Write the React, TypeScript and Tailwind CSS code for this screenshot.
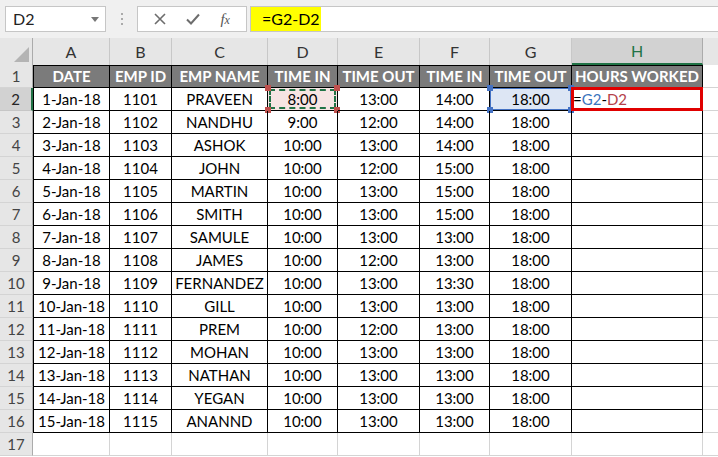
import React from "react";

const rows: string[][] = [
  ["1-Jan-18", "1101", "PRAVEEN", "8:00", "13:00", "14:00", "18:00"],
  ["2-Jan-18", "1102", "NANDHU", "9:00", "12:00", "14:00", "18:00"],
  ["3-Jan-18", "1103", "ASHOK", "10:00", "13:00", "14:00", "18:00"],
  ["4-Jan-18", "1104", "JOHN", "10:00", "12:00", "15:00", "18:00"],
  ["5-Jan-18", "1105", "MARTIN", "10:00", "13:00", "15:00", "18:00"],
  ["6-Jan-18", "1106", "SMITH", "10:00", "13:00", "15:00", "18:00"],
  ["7-Jan-18", "1107", "SAMULE", "10:00", "13:00", "13:00", "18:00"],
  ["8-Jan-18", "1108", "JAMES", "10:00", "12:00", "13:00", "18:00"],
  ["9-Jan-18", "1109", "FERNANDEZ", "10:00", "13:00", "13:30", "18:00"],
  ["10-Jan-18", "1110", "GILL", "10:00", "13:00", "13:00", "18:00"],
  ["11-Jan-18", "1111", "PREM", "10:00", "12:00", "13:00", "18:00"],
  ["12-Jan-18", "1112", "MOHAN", "10:00", "13:00", "13:00", "18:00"],
  ["13-Jan-18", "1113", "NATHAN", "10:00", "13:00", "13:00", "18:00"],
  ["14-Jan-18", "1114", "YEGAN", "10:00", "13:00", "13:00", "18:00"],
  ["15-Jan-18", "1115", "ANANND", "10:00", "13:00", "13:00", "18:00"],
];

const headers = ["DATE", "EMP ID", "EMP NAME", "TIME IN", "TIME OUT", "TIME IN", "TIME OUT", "HOURS WORKED"];
const letters = ["A", "B", "C", "D", "E", "F", "G", "H"];

const grid = "grid grid-cols-[33px_77px_62px_96px_70px_82px_70px_82px_131px_1fr]";

function Corner({ color }: { color: string }) {
  return (
    <>
      <span className={`absolute -left-[3px] -top-[3px] h-[6px] w-[6px] ${color}`} />
      <span className={`absolute -right-[3px] -top-[3px] h-[6px] w-[6px] ${color}`} />
      <span className={`absolute -left-[3px] -bottom-[3px] h-[6px] w-[6px] ${color}`} />
      <span className={`absolute -right-[3px] -bottom-[3px] h-[6px] w-[6px] ${color}`} />
    </>
  );
}

function RowHead({ n, active }: { n: number; active?: boolean }) {
  return (
    <div
      className={`flex h-[23px] items-center justify-center border-b border-r text-[15px] ${
        active
          ? "border-b-[#c6c6c6] border-r-2 border-r-[#217346] bg-[#d2d2d2] text-[#262626]"
          : "border-b-[#d4d4d4] border-r-[#ababab] bg-[#e6e6e6] text-[#444]"
      }`}
    >
      {n}
    </div>
  );
}

export default function App() {
  return (
    <div className="h-[457px] w-[718px] overflow-hidden bg-white font-['Lato','Liberation_Sans',sans-serif] text-black">
      {/* formula bar */}
      <div className="flex h-[38px] items-center bg-[#f0f0f0] pl-[5px]">
        <div className="flex h-[26px] w-[101px] items-center justify-between border border-[#c6c6c6] bg-white pl-[7px] pr-[6px] text-[16px] text-[#222]">
          <span>D2</span>
          <svg width="8" height="5" viewBox="0 0 8 5">
            <path d="M0 0h8L4 5z" fill="#777" />
          </svg>
        </div>
        <div className="flex w-[31px] flex-col items-center gap-[3px]">
          <span className="h-[2px] w-[2px] bg-[#aaa]" />
          <span className="h-[2px] w-[2px] bg-[#aaa]" />
          <span className="h-[2px] w-[2px] bg-[#aaa]" />
        </div>
        <div className="flex h-[26px] w-[110px] items-center justify-around border border-[#c6c6c6] bg-white px-[6px]">
          <svg width="12" height="12" viewBox="0 0 12 12">
            <path d="M1 1l10 10M11 1L1 11" stroke="#6d6d6d" strokeWidth="1.6" />
          </svg>
          <svg width="14" height="12" viewBox="0 0 14 12">
            <path d="M1 6.5l4 4L13 1.5" stroke="#6d6d6d" strokeWidth="2" fill="none" />
          </svg>
          <span className="font-['Liberation_Serif',serif] text-[15px] italic text-[#555]">
            f<span className="text-[12px]">x</span>
          </span>
        </div>
        <div className="ml-[3px] flex h-[26px] flex-1 items-center border-y border-l border-[#c6c6c6] bg-white">
          <div className="flex h-full w-[70px] items-center bg-[#ffff00] pl-[11px] text-[16px]">=G2-D2</div>
        </div>
      </div>

      {/* column headers */}
      <div className={`${grid} h-[27px] bg-[#e6e6e6]`}>
        <div className="relative border-r border-[#ababab]">
          <svg className="absolute bottom-[3px] right-[3px]" width="15" height="15" viewBox="0 0 15 15">
            <path d="M15 0v15H0z" fill="#b4b4b4" />
          </svg>
        </div>
        {letters.map((l) =>
          l === "H" ? (
            <div key={l} className="flex items-center justify-center border-b-2 border-r border-b-[#217346] border-r-[#ababab] bg-[#d2d2d2] text-[16px] text-[#217346]">
              {l}
            </div>
          ) : (
            <div key={l} className="flex items-center justify-center border-r border-[#c8c8c8] text-[16px] text-[#333]">
              {l}
            </div>
          )
        )}
        <div className="bg-[#e6e6e6]" />
      </div>

      {/* row 1 headings */}
      <div className={grid}>
        <RowHead n={1} />
        {headers.map((h, i) => (
          <div
            key={h + i}
            className={`flex h-[23px] items-center justify-center whitespace-nowrap border-b border-r border-t border-black bg-[#7b7b7b] text-[15px] font-bold text-white ${
              i === 0 ? "border-l" : ""
            }`}
          >
            {h}
          </div>
        ))}
        <div className="border-b border-[#d4d4d4]" />
      </div>

      {/* data rows */}
      {rows.map((r, ri) => (
        <div key={ri} className={grid}>
          <RowHead n={ri + 2} active={ri === 0} />
          {r.map((v, ci) => {
            const base = `relative flex h-[23px] items-center justify-center whitespace-nowrap border-b border-r border-black text-[15px] ${
              ci === 0 ? "border-l" : ""
            }`;
            if (ri === 0 && ci === 3) {
              return (
                <div key={ci} className={`${base} bg-[#f6e4e3]`}>
                  <span className="absolute inset-[1px] border-2 border-dashed border-[#217346]" />
                  <Corner color="bg-[#c0504d]" />
                  <span className="relative">{v}</span>
                </div>
              );
            }
            if (ri === 0 && ci === 6) {
              return (
                <div key={ci} className={`${base} bg-[#dde6f4]`}>
                  <span className="absolute inset-0 border border-[#4472c4]" />
                  <Corner color="bg-[#4472c4]" />
                  <span className="relative">{v}</span>
                </div>
              );
            }
            return (
              <div key={ci} className={base}>
                {v}
              </div>
            );
          })}
          {ri === 0 ? (
            <div className="relative flex h-[23px] items-center border-b border-r border-black pl-[1px] text-[15px]">
              <span className="absolute -inset-x-[1px] -inset-y-[1px] border-[3px] border-[#e00000]" />
              <span className="relative">
                =<span className="text-[#3b74bd]">G2</span>-<span className="text-[#b4414a]">D2</span>
              </span>
            </div>
          ) : (
            <div className="h-[23px] border-b border-r border-black" />
          )}
          <div className="h-[23px] border-b border-[#d4d4d4]" />
        </div>
      ))}

      {/* row 17 */}
      <div className={grid}>
        <RowHead n={17} />
        {letters.map((l) => (
          <div key={l} className="h-[23px] border-b border-r border-[#d4d4d4]" />
        ))}
        <div className="h-[23px] border-b border-[#d4d4d4]" />
      </div>
    </div>
  );
}
